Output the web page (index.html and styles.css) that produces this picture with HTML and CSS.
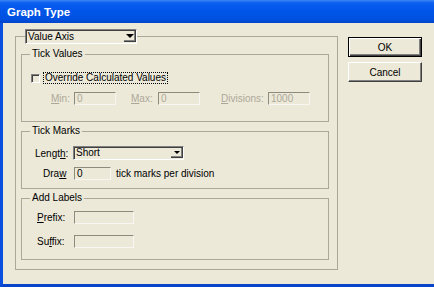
FILE: index.html
```html
<!DOCTYPE html>
<html lang="en">
<head>
  <meta charset="UTF-8">
  <title>Graph Type</title>
  <link rel="stylesheet" href="styles.css">
</head>
<body>
  <div class="window">
    <div class="titlebar">Graph Type</div>
    <div class="client">
      <fieldset class="axis-box">
        <legend class="combo axis-combo">
          <span class="combo-text">Value Axis</span>
          <span class="combo-btn"><span class="arrow arrow-big"></span></span>
        </legend>

        <fieldset class="group tick-values">
          <legend>Tick Values</legend>
          <div class="row check-row">
            <span class="checkbox"></span>
            <span class="focus">Override Calculated Values</span>
          </div>
          <div class="row range-row disabled">
            <span class="lbl lbl-min"><u>M</u>in:</span>
            <span class="field w42">0</span>
            <span class="lbl lbl-max"><u>M</u>ax:</span>
            <span class="field w42">0</span>
            <span class="lbl lbl-div"><u>D</u>ivisions:</span>
            <span class="field w42">1000</span>
          </div>
        </fieldset>

        <fieldset class="group tick-marks">
          <legend>Tick Marks</legend>
          <div class="row length-row">
            <span class="lbl lbl-length">Lengt<u>h</u>:</span>
            <span class="combo length-combo">
              <span class="combo-text">Short</span>
              <span class="combo-btn"><span class="arrow"></span></span>
            </span>
          </div>
          <div class="row draw-row">
            <span class="lbl lbl-draw">Dra<u>w</u></span>
            <span class="field w37">0</span>
            <span class="after">tick marks per division</span>
          </div>
        </fieldset>

        <fieldset class="group add-labels">
          <legend>Add Labels</legend>
          <div class="row prefix-row">
            <span class="lbl lbl-fix"><u>P</u>refix:</span>
            <span class="field w60"></span>
          </div>
          <div class="row suffix-row">
            <span class="lbl lbl-fix">Su<u>f</u>fix:</span>
            <span class="field w60"></span>
          </div>
        </fieldset>
      </fieldset>

      <div class="buttons">
        <button class="btn btn-default">OK</button>
        <button class="btn">Cancel</button>
      </div>
    </div>
  </div>
</body>
</html>
```

FILE: styles.css
```css
* {
  box-sizing: border-box;
}

body {
  margin: 0;
  background: #ece9d8;
  font-family: "Liberation Sans", Arial, sans-serif;
  font-size: 10px;
  color: #000;
}

.window {
  width: 434px;
  height: 287px;
  overflow: hidden;
}

.titlebar {
  height: 23px;
  padding-left: 7px;
  line-height: 24px;
  font-size: 11.5px;
  font-weight: bold;
  color: #fff;
  background: linear-gradient(to bottom, #3d86f4 0, #0a5ef0 3px, #0055e8 50%, #0050e0 85%, #0043c8 100%);
}

.client {
  height: 264px;
  border-left: 3px solid #0a4fe0;
  border-bottom: 3px solid #0844c8;
  padding: 6px 0 0 12px;
  display: flex;
  align-items: flex-start;
  gap: 10px;
}

fieldset {
  margin: 0;
  min-width: 0;
  border: 1px solid #aca899;
}

.axis-box {
  width: 323px;
  padding: 4px 8px 9px 5px;
}

/* combo boxes */
.combo {
  display: flex;
  align-items: center;
  background: #ece9d8;
  border: 1px solid;
  border-color: #808080 #fff #fff #808080;
  box-shadow: inset 1px 1px 0 #404040;
}

.combo-text {
  flex: 1;
  padding-left: 2px;
  line-height: 12px;
}

.combo-btn {
  width: 12px;
  align-self: stretch;
  margin: 1px 0 1px 0;
  display: flex;
  align-items: center;
  justify-content: center;
  border-right: 1px solid #404040;
  border-bottom: 1px solid #404040;
  box-shadow: inset -1px -1px 0 #808080;
}

.arrow {
  width: 0;
  height: 0;
  border-left: 3px solid transparent;
  border-right: 3px solid transparent;
  border-top: 3px solid #000;
}

.arrow-big {
  border-left-width: 4px;
  border-right-width: 4px;
  border-top-width: 4px;
}

.axis-combo {
  width: 112px;
  height: 15px;
  margin-left: 4px;
  padding: 0;
}

.length-combo {
  width: 111px;
  height: 14px;
}

/* group boxes */
.group {
  padding: 0;
}

.group legend {
  margin-left: 8px;
  padding: 0 2px;
  line-height: 12px;
}

.tick-values {
  padding-bottom: 16px;
}

.tick-marks {
  margin-top: 3px;
  padding-bottom: 8px;
}

.add-labels {
  margin-top: 3px;
  padding-bottom: 11px;
}

.row {
  display: flex;
  align-items: center;
}

.lbl {
  line-height: 13px;
}

.disabled {
  color: #aca899;
}

.field {
  height: 13px;
  line-height: 11px;
  padding-left: 2px;
  border: 1px solid;
  border-color: #8e8b7e #f7f6f0 #f7f6f0 #8e8b7e;
}

.w42 { width: 42px; }
.w37 { width: 37px; }
.w60 { width: 60px; }

/* tick values */
.check-row {
  margin-top: 12px;
  height: 12px;
  padding-left: 9px;
}

.checkbox {
  width: 9px;
  height: 9px;
  border: 1px solid;
  border-color: #808080 #fff #fff #808080;
  box-shadow: inset 1px 1px 0 #404040;
}

.focus {
  margin-left: 4px;
  padding: 0 1px;
  line-height: 10px;
  outline: 1px dotted #000;
}

.range-row {
  margin-top: 8px;
  height: 13px;
  padding-left: 29px;
}

.lbl-min { width: 23px; }
.lbl-max { width: 27px; margin-left: 15px; }
.lbl-div { width: 47px; margin-left: 21px; }

/* tick marks */
.length-row {
  margin-top: 9px;
  height: 14px;
  padding-left: 13px;
}

.lbl-length { width: 38px; }

.draw-row {
  margin-top: 7px;
  height: 13px;
  padding-left: 21px;
}

.lbl-draw { width: 31px; }

.after {
  margin-left: 5px;
}

/* add labels */
.prefix-row {
  margin-top: 7px;
  padding-left: 15px;
}

.suffix-row {
  margin-top: 11px;
  padding-left: 15px;
}

.lbl-fix { width: 37px; }

/* buttons */
.buttons {
  margin-top: 8px;
  display: flex;
  flex-direction: column;
  gap: 5px;
}

.btn {
  width: 74px;
  height: 20px;
  padding: 0;
  font-family: "Liberation Sans", Arial, sans-serif;
  font-size: 10px;
  color: #000;
  background: #ece9d8;
  border: 1px solid;
  border-color: #fff #404040 #404040 #fff;
  box-shadow: inset -1px -1px 0 #808080;
}

.btn-default {
  border-color: #000;
  box-shadow: inset 1px 1px 0 #fff, inset -1px -1px 0 #404040, inset -2px -2px 0 #808080;
}
```
